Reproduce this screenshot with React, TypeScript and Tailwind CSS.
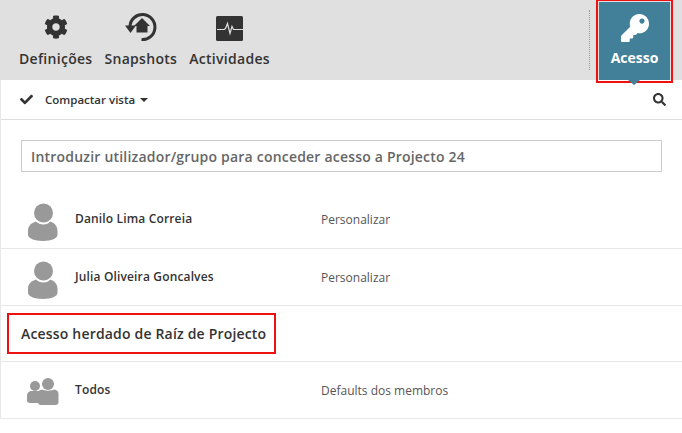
import { FaCheck, FaCog, FaKey, FaSearch } from 'react-icons/fa';
import type { ReactNode } from 'react';

const font = { fontFamily: '"Open Sans", sans-serif' };

const SnapshotIcon = () => (
  <svg width="32" height="30" viewBox="0 0 32 30" fill="none">
    <path d="M5 14 A12.500 12.500 0 1 1 16.500 27.500" stroke="#333" strokeWidth="3" />
    <path d="M0 13.500h11l-5.500 7.500z" fill="#333" />
    <path d="M17 6l-8 8h2.500v6.500h11V14H25z" fill="#333" />
  </svg>
);

const ActivityIcon = () => (
  <svg width="27" height="25" viewBox="0 0 27 25" className="mt-[2px]">
    <rect width="27" height="25" rx="1.500" fill="#333" />
    <path d="M1 13.500h7l1.500-1 2 -5 2.500 10 2-7 1.500 3h9.500" stroke="#e0e0e0" strokeWidth="1.200" fill="none" />
  </svg>
);

const Person = () => (
  <svg width="30" height="38" viewBox="0 0 30 38" fill="#999">
    <circle cx="15.500" cy="10" r="9.500" />
    <path d="M0 28c0-5 3-8 8-9.500 2 2 4.500 3 7.500 3s5-1 7-3c4 1.500 7 4.500 7 9.500v4c0 3-6 6-14.500 6S0 35 0 32z" />
  </svg>
);

const Group = () => (
  <svg width="32" height="27" viewBox="0 0 32 27" fill="#999">
    <circle cx="8" cy="8" r="5" />
    <path d="M0 18c0-3 1.500-4.500 4-5h8v12H3c-2 0-3-1-3-2.500z" />
    <circle cx="21" cy="6" r="6" />
    <path d="M11 15c0-2 1.500-3 4-3.500 2 1.500 10 1.500 12 0 3 .5 4.500 2 4.500 4.500v8c0 2-1 3-3 3H14c-2 0-3-1-3-3z" />
  </svg>
);

function NavItem({ icon, label }: { icon: ReactNode; label: string }) {
  return (
    <div className="flex flex-col items-center">
      <div className="flex h-[32px] items-center justify-center">{icon}</div>
      <span className="mt-[6px] text-[14px] leading-[20px] font-semibold tracking-[0.3px] text-[#333]">{label}</span>
    </div>
  );
}

function Row({ icon, iconClass, name, role, height }: { icon: ReactNode; iconClass: string; name: string; role: string; height: string }) {
  return (
    <div className={`flex items-center border-b border-[#e8e8e8] ${height}`}>
      <div className={`flex w-[74px] justify-center pl-[11px] pr-[2px] ${iconClass}`}>{icon}</div>
      <div className="w-[246px] text-[12px] font-semibold tracking-[0.15px] text-[#333]">{name}</div>
      <div className="pt-[2px] text-[12px] text-[#555]">{role}</div>
    </div>
  );
}

export default function App() {
  return (
    <div className="h-[433px] w-[682px] overflow-hidden bg-white" style={font}>
      <header className="relative flex h-[80px] bg-[#e0e0e0]">
        <div className="flex gap-[12px] pl-[19px] pt-[11px]">
          <NavItem icon={<FaCog size={24} color="#333" />} label="Definições" />
          <NavItem icon={<SnapshotIcon />} label="Snapshots" />
          <NavItem icon={<ActivityIcon />} label="Actividades" />
        </div>
        <div className="ml-auto mt-[10px] mr-[92px] h-[60px] border-l border-dotted border-[#999]" />
        <div className="absolute left-[599px] top-[2px] flex h-[78px] w-[71px] flex-col items-center bg-[#428099] pt-[12px] outline-2 outline-offset-1 outline-[#ee1111]">
          <FaKey size={28} color="white" />
          <span className="mt-[6px] text-[14px] leading-[20px] font-bold text-white">Acesso</span>
        </div>
        <div className="absolute left-[628px] top-[80px] h-0 w-0 border-x-[6px] border-t-[5px] border-x-transparent border-t-[#428099]" />
      </header>

      <div className="border-l border-[#e8e8e8]">
        <div className="flex h-[40px] items-center border-b border-[#ddd] pl-[19px] pr-[16px]">
          <FaCheck size={13} color="#333" />
          <span className="ml-[12px] text-[11.5px] font-semibold text-[#333]">Compactar vista</span>
          <div className="ml-[5px] h-0 w-0 border-x-[4px] border-t-[4px] border-x-transparent border-t-[#333]" />
          <FaSearch size={13} color="#333" className="ml-auto" />
        </div>

        <div className="h-[69px] px-[20px] pt-[20px]">
          <div className="flex h-[32px] w-[641px] items-center border border-[#ccc] px-[9px] text-[14px] font-semibold tracking-[0.2px] text-[#666]">
            Introduzir utilizador/grupo para conceder acesso a Projecto 24
          </div>
        </div>

        <Row icon={<Person />} iconClass="mt-[7px]" name="Danilo Lima Correia" role="Personalizar" height="h-[60px]" />
        <Row icon={<Person />} iconClass="mt-[6px]" name="Julia Oliveira Goncalves" role="Personalizar" height="h-[57px]" />

        <div className="flex h-[56px] items-center border-b border-[#e8e8e8] pl-[6px]">
          <div className="flex h-[41px] w-[269px] items-center border-2 border-[#ee1111] pl-[12px] text-[14px] font-semibold tracking-[0.18px] text-[#333]">
            Acesso herdado de Raíz de Projecto
          </div>
        </div>

        <Row icon={<Group />} iconClass="mt-[2px]" name="Todos" role="Defaults dos membros" height="h-[57px]" />
      </div>
    </div>
  );
}
